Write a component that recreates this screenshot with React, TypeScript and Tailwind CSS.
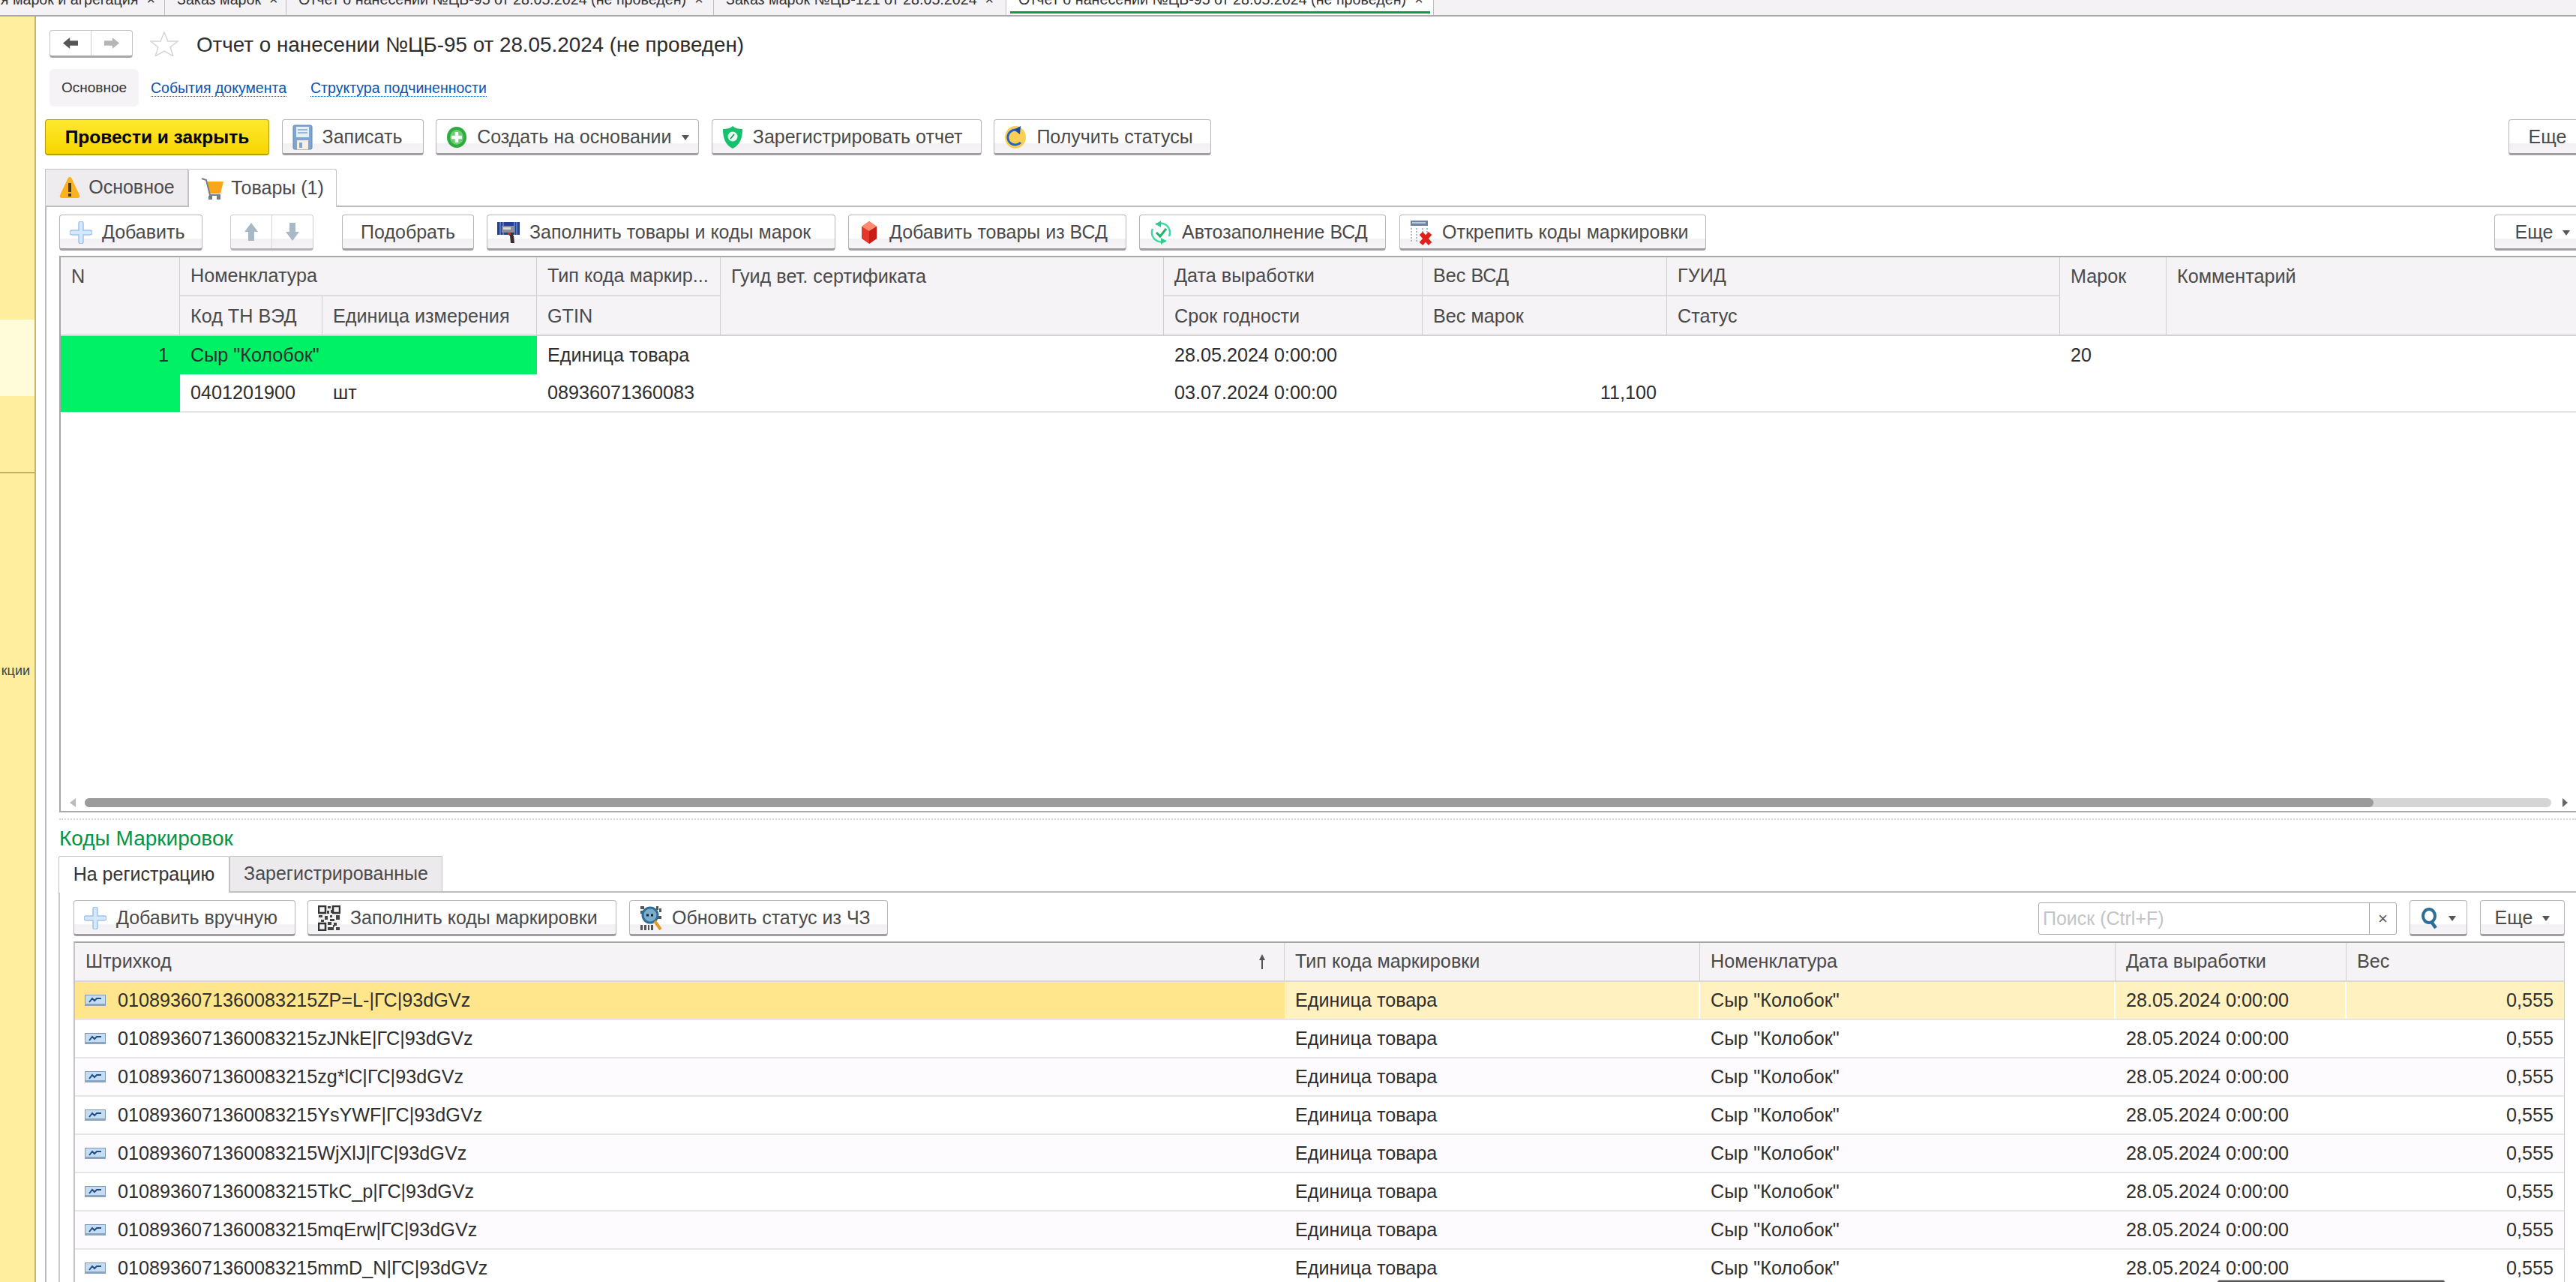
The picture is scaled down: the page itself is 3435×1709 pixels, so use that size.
import React from "react";

const Plus = () => (
  <svg width="30" height="30" viewBox="0 0 30 30" className="shrink-0">
    <path d="M12 3a3 3 0 0 1 6 0v9h9a3 3 0 0 1 0 6h-9v9a3 3 0 0 1-6 0v-9H3a3 3 0 0 1 0-6h9z" fill="#d6e8fb" stroke="#9cc4ee" strokeWidth="1.5" />
  </svg>
);
const Floppy = () => (
  <svg width="27" height="34" viewBox="0 0 27 34" className="shrink-0">
    <rect x="1" y="1" width="25" height="32" rx="2" fill="#7fa6d0" stroke="#5f86b4" />
    <rect x="5" y="3" width="17" height="14" fill="#e6eff8" />
    <path d="M7 7h13M7 11h13" stroke="#7fa6d0" strokeWidth="1.5" />
    <rect x="6" y="21" width="15" height="12" fill="#f4f0dc" />
    <rect x="9" y="24" width="4" height="7" fill="#7fa6d0" />
  </svg>
);
const CirclePlus = () => (
  <svg width="28" height="30" viewBox="0 0 28 30" className="shrink-0">
    <ellipse cx="14" cy="15" rx="13" ry="14" fill="#2eab3f" />
    <ellipse cx="14" cy="15" rx="9" ry="10" fill="#6ccf74" />
    <path d="M14 8v14M7 15h14" stroke="#fff" strokeWidth="4.5" />
  </svg>
);
const Shield = () => (
  <svg width="28" height="32" viewBox="0 0 28 32" className="shrink-0">
    <path d="M14 1c3 3 8 4 13 4 0 12-3 21-13 26C4 26 1 17 1 5c5 0 10-1 13-4z" fill="#15c26b" />
    <circle cx="14" cy="15" r="6.5" fill="#e8fbf1" />
    <path d="M11 18l5-6" stroke="#0d8f4e" strokeWidth="1.5" />
  </svg>
);
const Refresh = () => (
  <svg width="30" height="32" viewBox="0 0 30 32" className="shrink-0">
    <ellipse cx="15" cy="16" rx="14" ry="15" fill="#fbcf55" />
    <path d="M19 7a10 10 0 1 0 3 16" fill="none" stroke="#1f66c8" strokeWidth="3" />
    <path d="M13 6l9-5-1 11z" fill="#1848a8" />
  </svg>
);
const Warn = () => (
  <svg width="30" height="30" viewBox="0 0 30 30" className="shrink-0">
    <path d="M15 1c2 0 3 2 4 5l9 19c1 3-1 4-3 4H5c-2 0-4-1-3-4l9-19c1-3 2-5 4-5z" fill="#fbb21c" />
    <rect x="13" y="9" width="4" height="12" fill="#4a3a10" />
    <rect x="13" y="23" width="4" height="4" fill="#4a3a10" />
  </svg>
);
const Cart = () => (
  <svg width="30" height="30" viewBox="0 0 30 30" className="shrink-0">
    <path d="M8 6h22l-4 16H11z" fill="#fca41c" />
    <path d="M1 2l6 2 5 20h14" fill="none" stroke="#6f7f8f" strokeWidth="2" />
    <rect x="10" y="25" width="5" height="5" fill="#6f7f8f" />
    <rect x="21" y="25" width="5" height="5" fill="#6f7f8f" />
  </svg>
);
const Up = ({ down = false }: { down?: boolean }) => (
  <svg width="20" height="26" viewBox="0 0 20 26" className={down ? "rotate-180" : ""}>
    <path d="M10 1l9 12h-5v12H6V13H1z" fill="#a9b8c6" />
  </svg>
);
const Scanner = () => (
  <svg width="30" height="28" viewBox="0 0 30 28" className="shrink-0">
    <rect x="0" y="0" width="30" height="17" fill="#26408e" />
    <path d="M4 0v17M8 0v17M23 0v17M26 0v17" stroke="#6f8fd0" strokeWidth="1.5" />
    <path d="M6 5h17v9H6z" fill="#8d8d92" />
    <path d="M8 7h10v3H8z" fill="#d8d8d8" />
    <path d="M14 14h9l-2 4h-5z" fill="#3a3036" />
    <path d="M17 18h5l1 10h-5z" fill="#3c2a2e" />
    <path d="M14 14h4v3h-4z" fill="#b8302c" />
  </svg>
);
const Ruby = () => (
  <svg width="28" height="32" viewBox="0 0 28 32" className="shrink-0">
    <path d="M14 1l10 7v16l-10 7-10-7V8z" fill="#e6352b" />
    <path d="M14 1l10 7-10 6-10-6z" fill="#ff8a70" />
    <path d="M14 14l10-6v16l-10 7z" fill="#c91d18" />
  </svg>
);
const Auto = () => (
  <svg width="30" height="34" viewBox="0 0 30 34" className="shrink-0">
    <path d="M8 6a13 13 0 0 1 18 6M22 28a13 13 0 0 1-18-6" fill="none" stroke="#3fd8a0" strokeWidth="2.5" />
    <path d="M4 22a13 13 0 0 1 0-10M26 12a13 13 0 0 1 0 10" fill="none" stroke="#3fd8a0" strokeWidth="2.5" />
    <path d="M15 1l-7 5 7 4zM15 33l7-5-7-4z" fill="#32c98f" />
    <path d="M9 17l5 5 8-10" fill="none" stroke="#21b36a" strokeWidth="3" />
  </svg>
);
const Unpin = () => (
  <svg width="30" height="34" viewBox="0 0 30 34" className="shrink-0">
    <rect x="1" y="1" width="23" height="7" fill="#6b84a6" />
    <path d="M3 4h18" stroke="#d6e0ea" strokeWidth="1.5" />
    <path d="M2 11v18M9 11v20M17 11v8M23 11v8" stroke="#aeb9c4" strokeWidth="2" strokeDasharray="2 2" />
    <path d="M15 18l12 14M27 18L15 32" stroke="#e0201b" strokeWidth="6" />
  </svg>
);
const Qr = () => (
  <svg width="30" height="34" viewBox="0 0 30 34" className="shrink-0">
    <rect width="30" height="34" fill="#f2f2f2" />
    <path d="M1 1h9v9H1zM20 1h9v9h-9zM1 24h9v9H1z" fill="none" stroke="#333" strokeWidth="2.5" />
    <path d="M13 1h4v3h-4zM12 7h3v4h-3zM17 6h2v4h-2zM1 13h5v3H1zM9 14h4v5H9zM16 13h3v3h-3zM16 18h6v3h-6zM24 13h5v6h-5zM13 22h5v4h-5zM21 23h4v4h-4zM13 29h8v4h-8zM24 29h5v4h-5zM4 19h4v3H4zM20 26h2v3h-2z" fill="#444" />
  </svg>
);
const Scan = () => (
  <svg width="30" height="34" viewBox="0 0 30 34" className="shrink-0">
    <path d="M1 1h5v4H1zM1 7h3v4H1zM22 1h3v5h-3zM26 4h3v5h-3zM24 14h5v4h-5zM1 26h3v7H1zM6 26h3v7H6zM11 26h2v7h-2zM15 26h3v7h-3z" fill="#555" />
    <circle cx="14" cy="13" r="10" fill="#7aaecc" stroke="#2b6f99" strokeWidth="3" />
    <path d="M9 13h3M15 13h3" stroke="#123" strokeWidth="3" />
    <path d="M20 21l8 11" stroke="#e39a2a" strokeWidth="4" />
  </svg>
);
const Search = () => (
  <svg width="24" height="28" viewBox="0 0 24 28" className="shrink-0">
    <ellipse cx="11" cy="11" rx="8" ry="9" fill="none" stroke="#2b6f99" strokeWidth="4" />
    <path d="M15 20l5 7" stroke="#2b6f99" strokeWidth="4.5" />
  </svg>
);
const RowIcon = () => (
  <svg width="28" height="15" viewBox="0 0 28 15" className="shrink-0">
    <rect x="0.5" y="0.5" width="27" height="14" fill="#c5ddf3" stroke="#7e97b4" />
    <rect x="0" y="12" width="28" height="3" fill="#8aa3bf" />
    <path d="M6 10l4-5 3 3 3-3h6" fill="none" stroke="#234f86" strokeWidth="2" />
  </svg>
);
const Caret = () => (
  <svg width="10" height="7" viewBox="0 0 10 7" className="shrink-0">
    <path d="M0 0h10L5 7z" fill="#555" />
  </svg>
);

function Btn({ w, icon, text, caret, center }: { w: string; icon?: React.ReactNode; text?: string; caret?: boolean; center?: boolean }) {
  return (
    <div
      className={`${w} h-[48px] shrink-0 flex items-center ${icon && !center ? "justify-start pl-[13px]" : "justify-center"} gap-[13px] pt-[2px] rounded-[4px] border border-[#b8b6b8] border-b-[3px] border-b-[#a09ea0] bg-[linear-gradient(#ffffff_70%,#f2f0f3_72%,#f6f4f7)] text-[25px] text-[#4a4a4a] whitespace-nowrap`}
    >
      {icon}
      {text && <span>{text}</span>}
      {caret && <Caret />}
    </div>
  );
}

const Cols1 = "grid grid-cols-[159px_190px_286px_245px_591px_345px_326px_524px_142px_547px]";

function Head({ className = "", children }: { className?: string; children?: React.ReactNode }) {
  return (
    <div className={`px-[14px] flex items-center border-r border-[#cfcfcf] text-[#4a4a4a] whitespace-nowrap overflow-hidden ${className}`}>{children}</div>
  );
}

const codes = [
  "010893607136008321 5ZP=L-|ГС|93dGVz",
  "010893607136008321 5zJNkE|ГС|93dGVz",
  "010893607136008321 5zg*lC|ГС|93dGVz",
  "010893607136008321 5YsYWF|ГС|93dGVz",
  "010893607136008321 5WjXlJ|ГС|93dGVz",
  "010893607136008321 5TkC_p|ГС|93dGVz",
  "010893607136008321 5mqErw|ГС|93dGVz",
  "010893607136008321 5mmD_N|ГС|93dGVz",
].map((s) => s.replace(" ", ""));

const Cols2 = "grid grid-cols-[1613px_554px_554px_308px_291px]";

function TopTab({ w, text, end }: { w: string; text: string; end?: boolean }) {
  return (
    <div className={`${w} shrink-0 border-r border-[#bdbdbd] -mt-[12px] h-[34px] pl-[16px] pr-[12px] flex items-start ${end ? "justify-end" : "justify-start"} gap-[11px] whitespace-nowrap overflow-hidden`}>
      <span>{text}</span>
      <span>×</span>
    </div>
  );
}

export default function App() {
  return (
    <div className="relative w-[3435px] h-[1709px] overflow-hidden bg-white flex flex-col font-['Liberation_Sans',Arial,sans-serif] text-[25.2px] text-[#333]">
      {/* top tab bar */}
      <div className="h-[22px] shrink-0 flex bg-[#f5f2f6] border-b-2 border-[#a9a7a9] text-[19.7px] leading-[22px] text-[#333] overflow-hidden">
        <TopTab w="w-[220px]" text="я марок и агрегация" end />
        <TopTab w="w-[162px]" text="Заказ марок" />
        <TopTab w="w-[570px]" text="Отчет о нанесении №ЦБ-95 от 28.05.2024 (не проведен)" />
        <TopTab w="w-[390px]" text="Заказ марок №ЦБ-121 от 28.05.2024" />
        <div className="w-[570px] shrink-0 bg-white border-r border-[#bdbdbd] relative pl-[16px] -mt-[12px] h-[34px] flex items-start gap-[11px] whitespace-nowrap">
          <span>Отчет о нанесении №ЦБ-95 от 28.05.2024 (не проведен)</span>
          <span>×</span>
          <div className="absolute left-[5px] right-[4px] bottom-[4px] h-[3px] bg-[#0a9c4a]" />
        </div>
      </div>

      <div className="flex-1 flex min-h-0">
        {/* sidebar */}
        <div className="w-[48px] shrink-0 flex flex-col bg-[#ffee9d] border-r-2 border-[#c9b569]">
          <div className="h-[404px]" />
          <div className="h-[102px] bg-[#fffdd9]" />
          <div className="h-[103px] border-b-[2px] border-[#c4b068]" />
          <div className="h-[526px] flex items-center justify-end pr-[6px] text-[18px] text-[#444] overflow-hidden whitespace-nowrap">кции</div>
        </div>

        {/* main */}
        <div className="flex-1 min-w-0 pl-[12px] flex flex-col overflow-hidden">
          {/* title */}
          <div className="h-[37px] mt-[18px] ml-[6px] flex items-center">
            <div className="w-[111px] h-[37px] flex rounded-[4px] border border-[#c4c2c4] border-b-[3px] border-b-[#a8a6a8] bg-[#fff]">
              <div className="w-[55px] flex items-center justify-center border-r border-[#d0ced0]">
                <svg width="22" height="15" viewBox="0 0 24 18"><path d="M0 9l11-9v5h13v8H11v5z" fill="#555" /></svg>
              </div>
              <div className="flex-1 flex items-center justify-center">
                <svg width="22" height="15" viewBox="0 0 24 18"><path d="M24 9L13 0v5H0v8h13v5z" fill="#b5b5b5" /></svg>
              </div>
            </div>
            <svg width="38" height="33" viewBox="0 0 38 33" className="ml-[23px]">
              <path d="M19 1l5 12h13l-10 8 4 12-12-7-12 7 4-12L1 13h13z" fill="#fff" stroke="#d5d5d5" strokeWidth="1.5" />
            </svg>
            <div className="ml-[24px] pt-[2px] text-[27.8px] text-[#2c2c2c] whitespace-nowrap">Отчет о нанесении №ЦБ-95 от 28.05.2024 (не проведен)</div>
          </div>

          {/* section nav */}
          <div className="h-[50px] mt-[15px] ml-[6px] flex items-center text-[19.5px]">
            <div className="w-[119px] h-[50px] flex items-center justify-center rounded-[6px] bg-[#f5f3f6] text-[#333] text-[19px]">Основное</div>
            <a className="ml-[16px] mt-[1px] text-[#0b54b0] border-b border-dotted border-[#0b54b0] leading-[22px] whitespace-nowrap">События документа</a>
            <a className="ml-[32px] mt-[1px] text-[#0b54b0] border-b border-dotted border-[#0b54b0] leading-[22px] whitespace-nowrap">Структура подчиненности</a>
          </div>

          {/* commands */}
          <div className="mt-[17px] flex gap-[16.6px]">
            <div className="w-[299px] h-[48px] shrink-0 flex items-center justify-center pt-[2px] rounded-[4px] border border-[#b89c00] border-b-[2px] bg-[linear-gradient(#ffe92e,#f7d500)] text-[24.5px] font-bold text-black whitespace-nowrap">Провести и закрыть</div>
            <Btn w="w-[189px]" icon={<Floppy />} text="Записать" />
            <Btn w="w-[351px]" icon={<CirclePlus />} text="Создать на основании" caret />
            <Btn w="w-[360px]" icon={<Shield />} text="Зарегистрировать отчет" />
            <Btn w="w-[290px]" icon={<Refresh />} text="Получить статусы" />
            <div className="ml-auto -mr-[14px]">
              <Btn w="w-[104px]" text="Еще" />
            </div>
          </div>

          {/* form tabs */}
          <div className="mt-[18px] flex h-[51px] shrink-0 border-b-2 border-[#bdbbbd] text-[25px]">
            <div className="w-[191px] h-[50px] flex items-center justify-center gap-[10px] bg-[#efecef] border border-[#c4c2c4] text-[#4a4a4a]"><Warn />Основное</div>
            <div className="w-[198px] h-[51px] -mb-[2px] flex items-center justify-center gap-[10px] bg-white border border-b-0 border-[#c4c2c4] rounded-t-[3px] text-[#4a4a4a]"><Cart />Товары (1)</div>
          </div>

          {/* body with left rule */}
          <div className="flex-1 min-h-0 border-l-2 border-[#bbb] pl-[17px] flex flex-col">
            <div className="mt-[10px] flex">
              <Btn w="w-[191px] mr-[37px]" icon={<Plus />} text="Добавить" />
              <div className="w-[111px] h-[48px] mr-[38px] shrink-0 flex rounded-[4px] border border-[#cfcdcf] border-b-[3px] border-b-[#b5b3b5] bg-[linear-gradient(#ffffff_70%,#f2f0f3_72%,#f6f4f7)]">
                <div className="w-[55px] flex items-center justify-center border-r border-[#d8d6d8]"><Up /></div>
                <div className="flex-1 flex items-center justify-center"><Up down /></div>
              </div>
              <Btn w="w-[176px] mr-[17px]" text="Подобрать" />
              <Btn w="w-[465px] mr-[17px]" icon={<Scanner />} text="Заполнить товары и коды марок" />
              <Btn w="w-[371px] mr-[17px]" icon={<Ruby />} text="Добавить товары из ВСД" />
              <Btn w="w-[329px] mr-[18px]" icon={<Auto />} text="Автозаполнение ВСД" />
              <Btn w="w-[409px]" icon={<Unpin />} text="Открепить коды маркировки" />
              <div className="ml-auto -mr-[20px]">
                <Btn w="w-[129px]" text="Еще" caret />
              </div>
            </div>

            {/* table 1 */}
            <div className="mt-[7px] h-[742px] shrink-0 border-t-2 border-b-2 border-l-2 border-[#a9a7a9] flex flex-col">
              <div className={`${Cols1} grid-rows-[52px_53px] h-[105px] shrink-0 bg-[#f5f3f6] border-b-2 border-[#d2d2d2]`}>
                <Head className="row-span-2 items-start pt-[7px]">N</Head>
                <Head className="col-span-2 border-b-2 border-b-[#dcdcdc]">Номенклатура</Head>
                <Head className="border-b-2 border-b-[#dcdcdc]">Тип кода маркир...</Head>
                <Head className="row-span-2 items-start pt-[7px]">Гуид вет. сертификата</Head>
                <Head className="border-b-2 border-b-[#dcdcdc]">Дата выработки</Head>
                <Head className="border-b-2 border-b-[#dcdcdc]">Вес ВСД</Head>
                <Head className="border-b-2 border-b-[#dcdcdc]">ГУИД</Head>
                <Head className="row-span-2 items-start pt-[7px]">Марок</Head>
                <Head className="row-span-2 items-start pt-[7px] border-r-0">Комментарий</Head>
                <Head>Код ТН ВЭД</Head>
                <Head>Единица измерения</Head>
                <Head>GTIN</Head>
                <Head>Срок годности</Head>
                <Head>Вес марок</Head>
                <Head>Статус</Head>
              </div>
              <div className={`${Cols1} grid-rows-[51px_50px] h-[102px] shrink-0 border-b-2 border-[#e4e4e4] text-[#2e2e2e]`}>
                <div className="row-span-2 bg-[#00f066] flex justify-end pr-[15px] pt-[7px]">1</div>
                <div className="col-span-2 bg-[#00f066] flex items-center px-[14px]">Сыр "Колобок"</div>
                <div className="flex items-center px-[14px]">Единица товара</div>
                <div className="row-span-2" />
                <div className="flex items-center px-[14px]">28.05.2024 0:00:00</div>
                <div />
                <div />
                <div className="flex items-center px-[14px]">20</div>
                <div className="row-span-2" />
                <div className="flex items-center px-[14px]">0401201900</div>
                <div className="flex items-center px-[14px]">шт</div>
                <div className="flex items-center px-[14px]">08936071360083</div>
                <div className="flex items-center px-[14px]">03.07.2024 0:00:00</div>
                <div className="flex items-center justify-end px-[14px]">11,100</div>
                <div />
                <div />
              </div>
              <div className="flex-1" />
              <div className="h-[17px] mb-[3px] flex items-center">
                <svg width="8" height="12" viewBox="0 0 8 12" className="ml-[12px]"><path d="M8 0v12L0 6z" fill="#bbb" /></svg>
                <div className="ml-[12px] w-[3289px] h-[12px] rounded-[6px] bg-[#d5d5d5]">
                  <div className="w-[3052px] h-[12px] rounded-[6px] bg-[#9c9a9d]" />
                </div>
                <svg width="7" height="12" viewBox="0 0 7 12" className="ml-[15px]"><path d="M0 0v12l7-6z" fill="#666" /></svg>
              </div>
            </div>

            <div className="mt-[8px] border-t-2 border-dotted border-[#d5d5d5]" />
            <div className="mt-[9px] text-[28px] leading-[32px] text-[#009646]">Коды Маркировок</div>

            {/* lower tabs */}
            <div className="mt-[7px] flex h-[49px] shrink-0 border-b-2 border-[#bdbbbd] text-[25px] -ml-[1px]">
              <div className="w-[228px] h-[49px] -mb-[2px] flex items-center justify-center bg-white border border-b-0 border-[#c4c2c4] rounded-t-[3px] text-[#333] whitespace-nowrap">На регистрацию</div>
              <div className="w-[284px] h-[48px] flex items-center justify-center bg-[#edeaed] border border-[#c4c2c4] text-[#4a4a4a] whitespace-nowrap">Зарегистрированные</div>
            </div>

            <div className="flex-1 min-h-0 border-l-2 border-[#c9c9c9] -ml-[1px] pl-[18px] pr-[15px] flex flex-col">
              <div className="mt-[10px] flex items-start">
                <Btn w="w-[296px] mr-[16px]" icon={<Plus />} text="Добавить вручную" />
                <Btn w="w-[412px] mr-[17px]" icon={<Qr />} text="Заполнить коды маркировки" />
                <Btn w="w-[345px]" icon={<Scan />} text="Обновить статус из ЧЗ" />
                <div className="ml-auto mt-[3px] w-[478px] h-[43px] flex rounded-[3px] border border-[#a9a7a9] bg-white text-[#c4c4c4] text-[25px]">
                  <div className="flex-1 pl-[5px] flex items-center">Поиск (Ctrl+F)</div>
                  <div className="w-[36px] border-l border-[#a9a7a9] flex items-center justify-center text-[#555] text-[22px]">×</div>
                </div>
                <Btn w="w-[77px] ml-[17px]" icon={<Search />} caret center />
                <Btn w="w-[113px] ml-[17px]" text="Еще" caret />
              </div>

              {/* table 2 */}
              <div className="mt-[7px] flex-1 min-h-0 border-t-2 border-l-2 border-r border-[#a9a7a9] border-l-[#c4c4c4] border-r-[#c9c9c9] flex flex-col overflow-hidden">
                <div className={`${Cols2} h-[52px] shrink-0 bg-[#f5f3f6] border-b-2 border-[#d8d8d8]`}>
                  <Head className="justify-between pr-[24px]">
                    Штрихкод
                    <svg width="10" height="20" viewBox="0 0 10 20"><path d="M5 0l4 8H6v12H4V8H1z" fill="#555" /></svg>
                  </Head>
                  <Head>Тип кода маркировки</Head>
                  <Head>Номенклатура</Head>
                  <Head>Дата выработки</Head>
                  <Head className="border-r-0">Вес</Head>
                </div>
                {codes.map((c, i) => {
                  const sel = i === 0;
                  const tint = i % 2 === 0 && !sel ? "bg-[#fdfbfd]" : "bg-white";
                  const cell = `flex items-center px-[14px] ${sel ? "bg-[#fff1c0] border-r-2 border-white" : ""}`;
                  return (
                    <div key={c} className={`${Cols2} h-[51px] shrink-0 border-b-2 border-[#e6e5e7] text-[#2e2e2e] ${tint}`}>
                      <div className={`flex items-center gap-[16px] pl-[13px] whitespace-nowrap ${sel ? "bg-[#ffe68c]" : ""}`}>
                        <RowIcon />
                        {c}
                      </div>
                      <div className={cell}>Единица товара</div>
                      <div className={cell}>Сыр "Колобок"</div>
                      <div className={cell}>28.05.2024 0:00:00</div>
                      <div className={`flex items-center justify-end px-[15px] ${sel ? "bg-[#fff1c0]" : ""}`}>0,555</div>
                    </div>
                  );
                })}
              </div>
            </div>
          </div>
        </div>
      </div>

      {/* stray control edge peeking in at the bottom of the window */}
      <div className="absolute left-[2957px] top-[1706px] w-[303px] h-[3px] rounded-t-[3px] border-t border-[#bbbbbb] bg-[#555]" />
    </div>
  );
}
